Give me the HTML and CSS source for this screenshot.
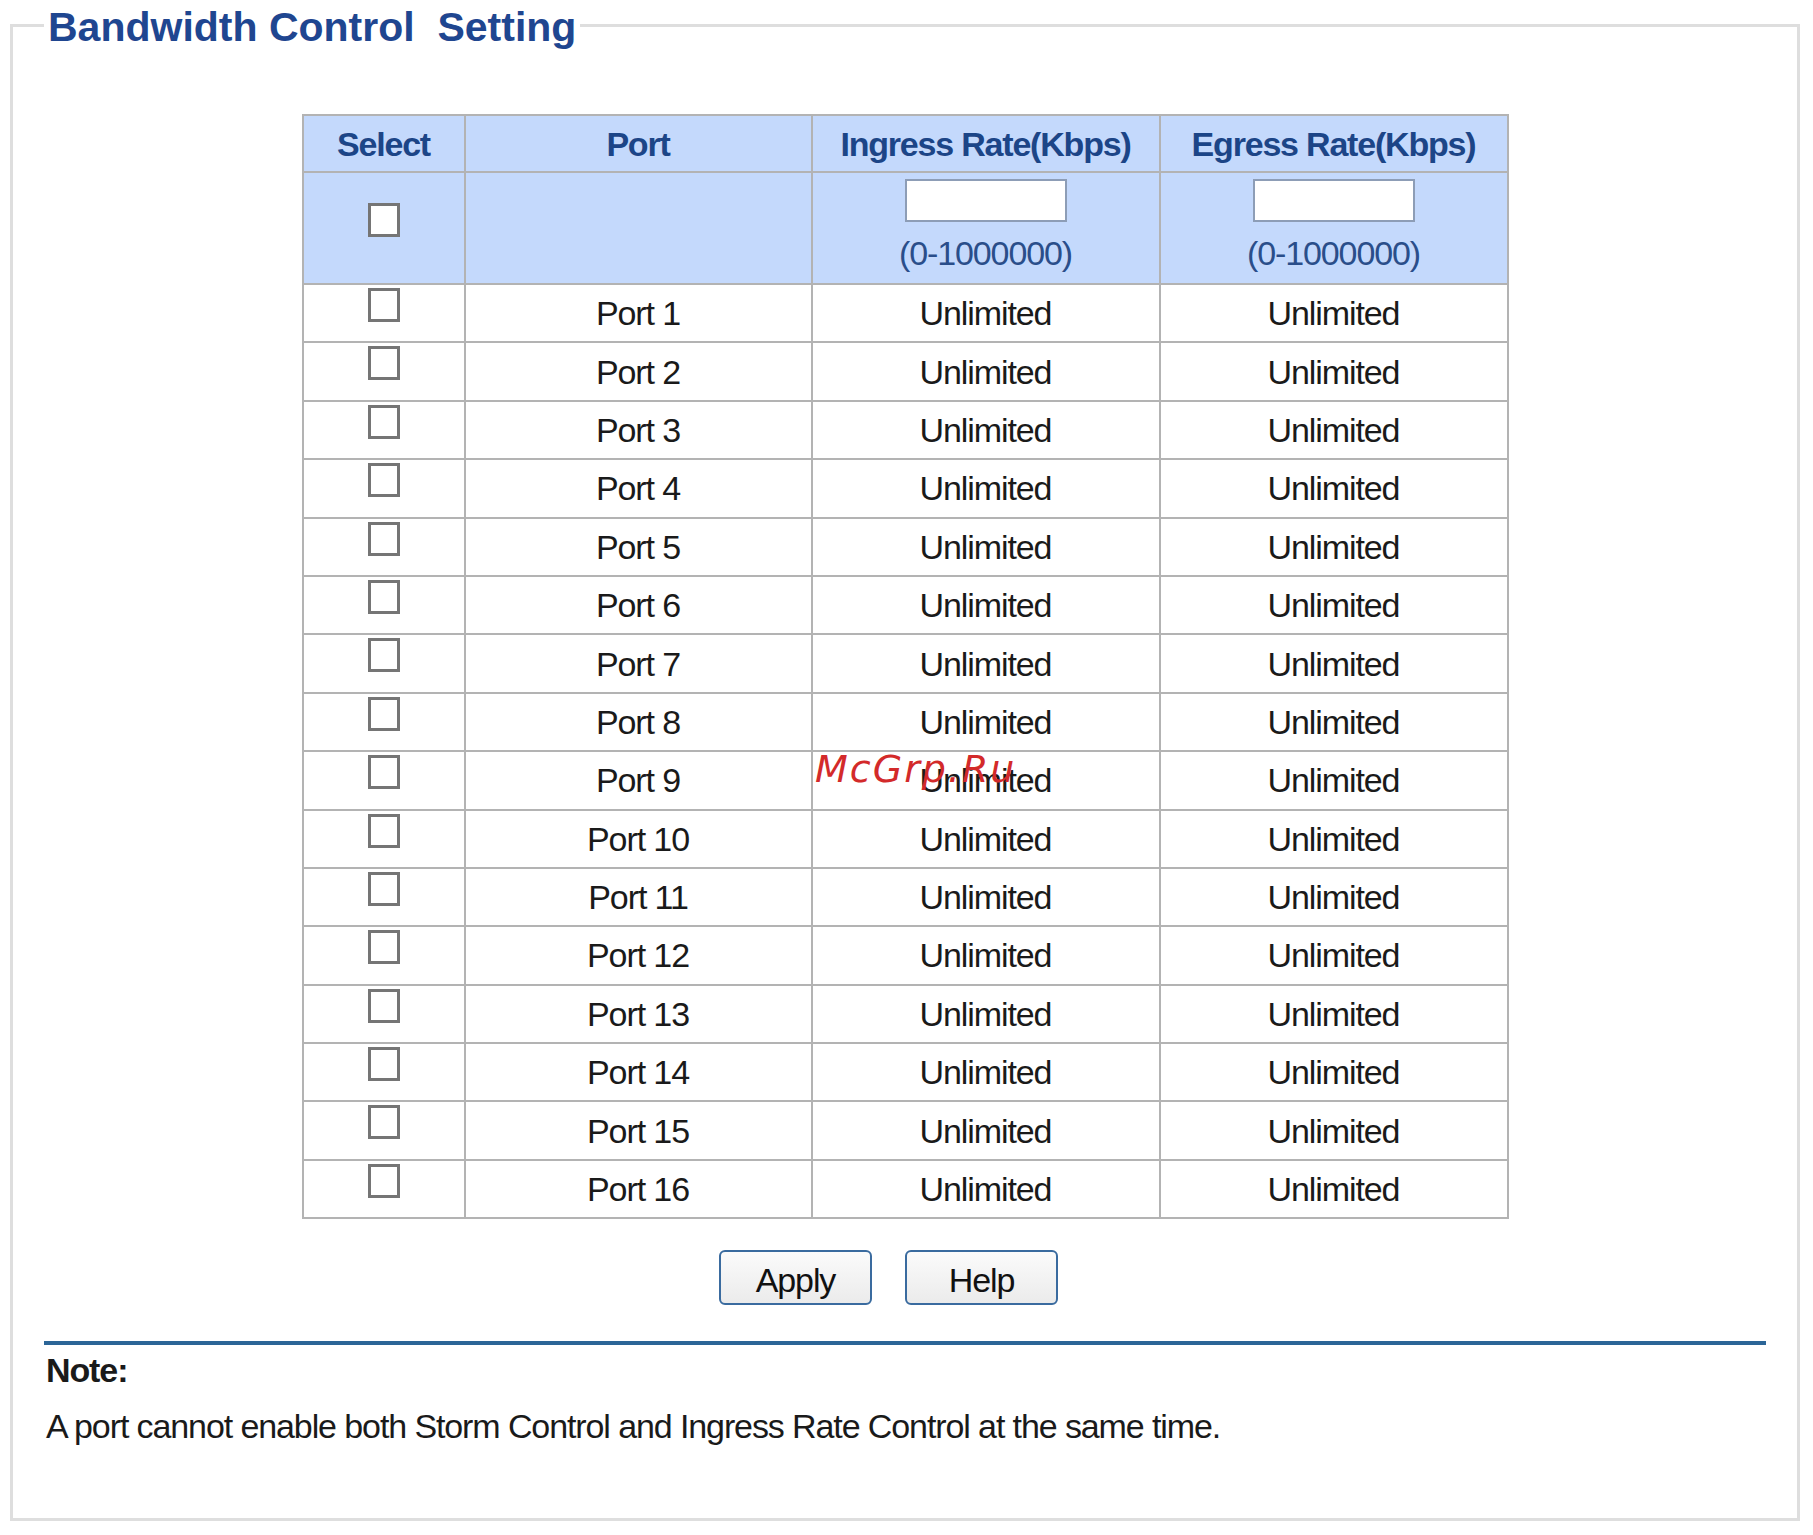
FILE: index.html
```html
<!DOCTYPE html>
<html lang="en">
<head>
    <meta charset="UTF-8">
    <title>Bandwidth Control Setting</title>
    <link rel="stylesheet" href="styles.css">
</head>
<body>
    <fieldset class="panel">
        <legend>Bandwidth Control&nbsp; Setting</legend>

        <table class="ports">
            <colgroup>
                <col class="col-select">
                <col class="col-port">
                <col class="col-rate">
                <col class="col-rate">
            </colgroup>
            <thead>
                <tr class="head-row">
                    <th>Select</th>
                    <th>Port</th>
                    <th>Ingress Rate(Kbps)</th>
                    <th>Egress Rate(Kbps)</th>
                </tr>
                <tr class="filter-row">
                    <td class="check-cell"><input type="checkbox" class="box"></td>
                    <td></td>
                    <td><input type="text" class="rate-input"><div class="range">(0-1000000)</div></td>
                    <td><input type="text" class="rate-input"><div class="range">(0-1000000)</div></td>
                </tr>
            </thead>
            <tbody>
                <tr><td class="check-cell"><input type="checkbox" class="box"></td><td>Port 1</td><td>Unlimited</td><td>Unlimited</td></tr>
                <tr><td class="check-cell"><input type="checkbox" class="box"></td><td>Port 2</td><td>Unlimited</td><td>Unlimited</td></tr>
                <tr><td class="check-cell"><input type="checkbox" class="box"></td><td>Port 3</td><td>Unlimited</td><td>Unlimited</td></tr>
                <tr><td class="check-cell"><input type="checkbox" class="box"></td><td>Port 4</td><td>Unlimited</td><td>Unlimited</td></tr>
                <tr><td class="check-cell"><input type="checkbox" class="box"></td><td>Port 5</td><td>Unlimited</td><td>Unlimited</td></tr>
                <tr><td class="check-cell"><input type="checkbox" class="box"></td><td>Port 6</td><td>Unlimited</td><td>Unlimited</td></tr>
                <tr><td class="check-cell"><input type="checkbox" class="box"></td><td>Port 7</td><td>Unlimited</td><td>Unlimited</td></tr>
                <tr><td class="check-cell"><input type="checkbox" class="box"></td><td>Port 8</td><td>Unlimited</td><td>Unlimited</td></tr>
                <tr><td class="check-cell"><input type="checkbox" class="box"></td><td>Port 9</td><td>Unlimited</td><td>Unlimited</td></tr>
                <tr><td class="check-cell"><input type="checkbox" class="box"></td><td>Port 10</td><td>Unlimited</td><td>Unlimited</td></tr>
                <tr><td class="check-cell"><input type="checkbox" class="box"></td><td>Port 11</td><td>Unlimited</td><td>Unlimited</td></tr>
                <tr><td class="check-cell"><input type="checkbox" class="box"></td><td>Port 12</td><td>Unlimited</td><td>Unlimited</td></tr>
                <tr><td class="check-cell"><input type="checkbox" class="box"></td><td>Port 13</td><td>Unlimited</td><td>Unlimited</td></tr>
                <tr><td class="check-cell"><input type="checkbox" class="box"></td><td>Port 14</td><td>Unlimited</td><td>Unlimited</td></tr>
                <tr><td class="check-cell"><input type="checkbox" class="box"></td><td>Port 15</td><td>Unlimited</td><td>Unlimited</td></tr>
                <tr><td class="check-cell"><input type="checkbox" class="box"></td><td>Port 16</td><td>Unlimited</td><td>Unlimited</td></tr>
            </tbody>
        </table>

        <div class="actions">
            <button type="button">Apply</button>
            <button type="button">Help</button>
        </div>

        <div class="note">
            <div class="note-title">Note:</div>
            <p>A port cannot enable both Storm Control and Ingress Rate Control at the same time.</p>
        </div>
    </fieldset>

    <div class="watermark">McGrp.Ru</div>
</body>
</html>
```

FILE: styles.css
```css
body {
    margin: 0;
    background: #ffffff;
    font-family: "Liberation Sans", Arial, sans-serif;
    color: #1a1a1a;
}

.panel {
    margin: 0 13px 0 10px;
    padding: 0 31px 72px 31px;
    border: 3px solid #dedede;
    min-width: 0;
}

.panel legend {
    padding: 4px 4px 0;
    line-height: 46px;
    font-size: 41px;
    font-weight: bold;
    color: #1f4690;
}

.ports {
    margin: 64px auto 0;
    width: 1206px;
    border-collapse: collapse;
    table-layout: fixed;
    border: 2px solid #b3b3b3;
    font-size: 34px;
    letter-spacing: -1.1px;
}
.col-select { width: 162px; }
.col-port { width: 347px; }
.col-rate { width: 348px; }

.ports th,
.ports td {
    border: 2px solid #b3b3b3;
    padding: 0;
    text-align: center;
    line-height: 40px;
}

.head-row {
    height: 57px;
}
.head-row th {
    background: #c4d9fc;
    color: #1c4587;
    font-weight: bold;
    letter-spacing: -1.2px;
}

.filter-row {
    height: 112px;
}
.filter-row td {
    background: #c4d9fc;
    vertical-align: top;
    padding-top: 6px;
}
.filter-row .check-cell {
    padding-top: 30px;
}

.rate-input {
    display: block;
    margin: 0 auto;
    width: 162px;
    height: 43px;
    box-sizing: border-box;
    border: 2px solid #8d9db6;
    background: #ffffff;
}

.range {
    margin-top: 11px;
    color: #2a4e8a;
}

.ports tbody tr {
    height: 58.4px;
}
.ports tbody td {
    vertical-align: middle;
}
.ports tbody .check-cell {
    vertical-align: top;
    padding-top: 3px;
}

.box {
    appearance: none;
    -webkit-appearance: none;
    display: block;
    margin: 0 auto;
    width: 32px;
    height: 34px;
    border: 3px solid #757575;
    background: #ffffff;
}

.actions {
    display: flex;
    justify-content: center;
    gap: 33px;
    margin-top: 31px;
    padding-right: 33px;
}
.actions button {
    width: 153px;
    height: 55px;
    padding: 6px 0 0;
    border: 2px solid #3a6b9f;
    border-radius: 6px;
    background: linear-gradient(#fbfbfb, #ebebeb);
    font-family: inherit;
    font-size: 34px;
    letter-spacing: -1.1px;
    color: #111111;
}

.note {
    margin-top: 36px;
    border-top: 4px solid #2b6597;
    font-size: 34px;
    letter-spacing: -1.1px;
    line-height: 40px;
}
.note-title {
    margin-top: 5px;
    padding-left: 2px;
    font-weight: bold;
}
.note p {
    margin: 16px 0 0;
    padding-left: 2px;
}

.watermark {
    position: absolute;
    left: 815px;
    top: 750px;
    font-family: "DejaVu Sans", sans-serif;
    font-style: italic;
    font-size: 38px;
    line-height: 38px;
    letter-spacing: 2px;
    color: #d32a2a;
}
```
